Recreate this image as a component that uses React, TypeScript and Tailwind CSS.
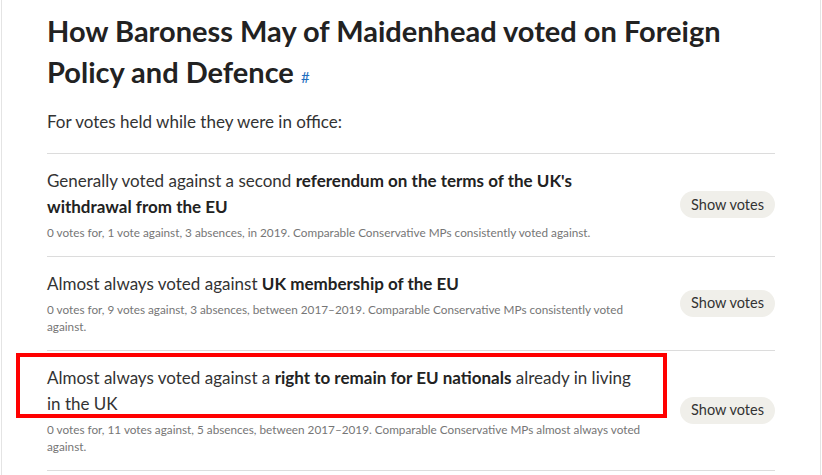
import React from "react";

const rows = [
  {
    main: (
      <>
        Generally voted against a second{" "}
        <b className="font-bold text-[#222]">referendum on the terms of the UK's withdrawal from the EU</b>
      </>
    ),
    sub: "0 votes for, 1 vote against, 3 absences, in 2019. Comparable Conservative MPs consistently voted against.",
  },
  {
    main: (
      <>
        Almost always voted against <b className="font-bold text-[#222]">UK membership of the EU</b>
      </>
    ),
    sub: "0 votes for, 9 votes against, 3 absences, between 2017–2019. Comparable Conservative MPs consistently voted against.",
  },
  {
    main: (
      <>
        Almost always voted against a <b className="font-bold text-[#222]">right to remain for EU nationals</b> already in living in the UK
      </>
    ),
    sub: "0 votes for, 11 votes against, 5 absences, between 2017–2019. Comparable Conservative MPs almost always voted against.",
  },
];

export default function App() {
  return (
    <div
      className="relative w-[822px] h-[475px] overflow-hidden bg-white"
      style={{ fontFamily: "'Source Sans Pro', Lato, 'Noto Sans', sans-serif" }}
    >
      <div className="mx-[1px] h-full border-x border-[#e4e4e4] px-[45px] pt-[10px]">
        <h2 className="text-[29px] leading-[41px] font-bold text-[#222]">
          How Baroness May of Maidenhead voted on Foreign Policy and Defence{" "}
          <a className="text-[15px] leading-[0] font-normal text-[#1f6fbf]">#</a>
        </h2>
        <p className="mt-[17px] text-[17px] leading-[26px] text-[#333]">For votes held while they were in office:</p>
        <div className="mt-[18px]">
          {rows.map((r, i) => (
            <div key={i} className="flex items-center justify-between border-t border-[#dcdcdc] pt-[14px] pb-[14px]">
              <div className="w-[602px]">
                <p className="w-[592px] text-[17px] leading-[26px] text-[#333]">{r.main}</p>
                <p className="mt-[4px] text-[11.75px] leading-[17.5px] text-[#767676]">{r.sub}</p>
              </div>
              <button className="h-[27px] w-[95px] rounded-full bg-[#f0efea] text-[14.5px] text-[#333]">Show votes</button>
            </div>
          ))}
          <div className="border-t border-[#dcdcdc]" />
        </div>
      </div>
      <div className="absolute left-[16px] top-[353px] h-[65px] w-[651px] border-[4px] border-[#f00]" />
    </div>
  );
}
